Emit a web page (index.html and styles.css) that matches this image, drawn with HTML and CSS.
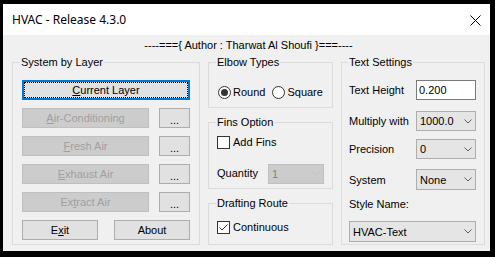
FILE: index.html
```html
<!DOCTYPE html>
<html>
<head>
<meta charset="utf-8">
<link rel="stylesheet" href="styles.css">
</head>
<body>
<div class="window">
  <div class="titlebar">
    <span class="title">HVAC - Release 4.3.0</span>
    <svg class="close" width="11" height="11" viewBox="0 0 11 11"><path d="M0.5 0.5 L10.5 10.5 M10.5 0.5 L0.5 10.5" stroke="#000" stroke-width="1" fill="none"/></svg>
  </div>
  <div class="client">
    <div class="author">----==={ Author : Tharwat Al Shoufi }===----</div>
    <div class="groups">
      <fieldset class="group g-layer">
        <legend>System by Layer</legend>
        <div class="btn btn-focus"><u>C</u>urrent Layer</div>
        <div class="btn-row"><div class="btn btn-main disabled"><u>A</u>ir-Conditioning</div><div class="btn btn-dots">...</div></div>
        <div class="btn-row"><div class="btn btn-main disabled"><u>F</u>resh Air</div><div class="btn btn-dots">...</div></div>
        <div class="btn-row"><div class="btn btn-main disabled"><u>E</u>xhaust Air</div><div class="btn btn-dots">...</div></div>
        <div class="btn-row"><div class="btn btn-main disabled">Ex<u>t</u>ract Air</div><div class="btn btn-dots">...</div></div>
        <div class="btn-row"><div class="btn btn-half">E<u>x</u>it</div><div class="btn btn-half">About</div></div>
      </fieldset>
      <div class="middle">
        <fieldset class="group g-elbow">
          <legend>Elbow Types</legend>
          <div class="radio-row">
            <span class="radio-item"><span class="radio checked"></span>Round</span>
            <span class="radio-item"><span class="radio"></span>Square</span>
          </div>
        </fieldset>
        <fieldset class="group g-fins">
          <legend>Fins Option</legend>
          <div class="check-row"><span class="check"></span>Add Fins</div>
          <div class="qty-row">
            <span class="qty-label">Quantity</span>
            <div class="combo combo-qty disabled"><span>1</span><svg class="chev" width="8" height="5" viewBox="0 0 8 5"><path d="M0.5 0.5 L4 4 L7.5 0.5" stroke="#c4c4c4" fill="none"/></svg></div>
          </div>
        </fieldset>
        <fieldset class="group g-route">
          <legend>Drafting Route</legend>
          <div class="check-row"><span class="check"><svg width="11" height="11" viewBox="0 0 11 11"><path d="M1.5 5.5 L4 8 L9.5 2.5" stroke="#333" stroke-width="1" fill="none"/></svg></span>Continuous</div>
        </fieldset>
      </div>
      <fieldset class="group g-text">
        <legend>Text Settings</legend>
        <div class="row r1"><span class="lbl">Text Height</span><div class="textbox">0.200</div></div>
        <div class="row r2"><span class="lbl">Multiply with</span><div class="combo"><span>1000.0</span><svg class="chev" width="8" height="5" viewBox="0 0 8 5"><path d="M0.5 0.5 L4 4 L7.5 0.5" stroke="#606060" fill="none"/></svg></div></div>
        <div class="row r3"><span class="lbl">Precision</span><div class="combo"><span>0</span><svg class="chev" width="8" height="5" viewBox="0 0 8 5"><path d="M0.5 0.5 L4 4 L7.5 0.5" stroke="#606060" fill="none"/></svg></div></div>
        <div class="row r4"><span class="lbl">System</span><div class="combo combo-tall"><span>None</span><svg class="chev" width="8" height="5" viewBox="0 0 8 5"><path d="M0.5 0.5 L4 4 L7.5 0.5" stroke="#606060" fill="none"/></svg></div></div>
        <div class="style-label">Style Name:</div>
        <div class="combo combo-wide"><span>HVAC-Text</span><svg class="chev" width="8" height="5" viewBox="0 0 8 5"><path d="M0.5 0.5 L4 4 L7.5 0.5" stroke="#606060" fill="none"/></svg></div>
      </fieldset>
    </div>
  </div>
</div>
</body>
</html>
```
FILE: styles.css
```css
html, body {
  margin: 0;
  padding: 0;
  background: #000;
}
body {
  font-family: "Liberation Sans", Arial, sans-serif;
  font-size: 11px;
  color: #000;
}
.window {
  margin: 4px 0 0 3px;
  width: 487px;
  height: 247px;
  background: #f0f0f0;
  display: flex;
  flex-direction: column;
}
.titlebar {
  height: 31px;
  flex: none;
  background: #fff;
  display: flex;
  align-items: center;
  justify-content: space-between;
  padding: 0 9px 0 9px;
  font-family: "Noto Sans", "Segoe UI", sans-serif;
  font-size: 12px;
}
.close {
  display: block;
  margin-top: 1px;
}
.client {
  flex: 1;
  padding: 0 5px 0 9px;
}
.author {
  margin-top: 4px;
  line-height: 13px;
  text-align: center;
}
.groups {
  display: flex;
  gap: 8px;
  margin-top: 4px;
}
.group {
  margin: 0;
  border: 1px solid #dcdcdc;
  min-width: 0;
  box-sizing: border-box;
}
legend {
  padding: 0 1px;
  margin-left: -1px;
  line-height: 13px;
  font-size: 11px;
}

/* Left group */
.g-layer {
  width: 188px;
  height: 189px;
  padding: 11px 9px 4px 9px;
  display: flex;
  flex-direction: column;
  gap: 8px;
}
.g-layer legend { margin-left: -2px; }
.btn {
  box-sizing: border-box;
  height: 20px;
  border: 1px solid #adadad;
  background: #e1e1e1;
  display: flex;
  align-items: center;
  justify-content: center;
  color: #000;
}
.btn-focus {
  border: 2px solid #0078d7;
  outline: 1px dotted #000;
  outline-offset: -3px;
}
.btn-row {
  display: flex;
  justify-content: space-between;
}
.btn-main { width: 127px; }
.btn-dots { width: 31px; padding-top: 3px; }
.btn-half { width: 76px; }
.btn.disabled {
  background: #cccccc;
  border-color: #bfbfbf;
  color: #a0a0a0;
}

/* Middle */
.middle {
  width: 125px;
  display: flex;
  flex-direction: column;
  gap: 8px;
}
.g-elbow {
  height: 52px;
  padding: 14px 4px 6px 8px;
}
.radio-row {
  display: flex;
  align-items: center;
  height: 18px;
  gap: 6px;
}
.radio-item {
  display: flex;
  align-items: center;
  gap: 2px;
}
.radio {
  box-sizing: border-box;
  width: 13px;
  height: 13px;
  border: 1px solid #333;
  border-radius: 50%;
  background: #fff;
  display: flex;
  align-items: center;
  justify-content: center;
  margin-left: 1px;
}
.radio.checked::after {
  content: "";
  width: 7px;
  height: 7px;
  border-radius: 50%;
  background: #333;
}
.g-fins {
  height: 73px;
  padding: 4px 4px 4px 8px;
}
.check-row {
  display: flex;
  align-items: center;
  height: 18px;
  gap: 3px;
}
.check {
  box-sizing: border-box;
  width: 13px;
  height: 13px;
  border: 1px solid #333;
  background: #fff;
  display: flex;
}
.qty-row {
  margin-top: 12px;
  height: 21px;
  display: flex;
  align-items: center;
  justify-content: space-between;
}
.qty-label { margin-top: -1px; }
.g-route {
  height: 48px;
  padding: 8px 4px 8px 8px;
}

/* Right group */
.g-text {
  width: 144px;
  height: 189px;
  padding: 11px 8px 2px 7px;
}
.row {
  display: flex;
  align-items: center;
  justify-content: space-between;
}
.r1 { height: 20px; }
.r2 { height: 20px; margin-top: 11px; }
.r3 { height: 20px; margin-top: 8px; }
.r4 { height: 21px; margin-top: 10px; }
.textbox {
  box-sizing: border-box;
  width: 60px;
  height: 20px;
  border: 1px solid #7a7a7a;
  background: #fff;
  padding-left: 2px;
  display: flex;
  align-items: center;
}
.combo {
  box-sizing: border-box;
  width: 60px;
  height: 20px;
  border: 1px solid #adadad;
  background: #e5e5e5;
  display: flex;
  align-items: center;
  justify-content: space-between;
  padding: 0 3px 0 3px;
}
.combo-tall { height: 21px; }
.combo.disabled {
  background: #cccccc;
  border-color: #bfbfbf;
  color: #838383;
}
.combo-qty {
  width: 56px;
  height: 20px;
  margin-right: 4px;
}
.style-label {
  margin-top: 6px;
  height: 16px;
  line-height: 16px;
}
.combo-wide {
  width: 127px;
  height: 21px;
  margin-top: 9px;
}
.chev { display: block; }
```
